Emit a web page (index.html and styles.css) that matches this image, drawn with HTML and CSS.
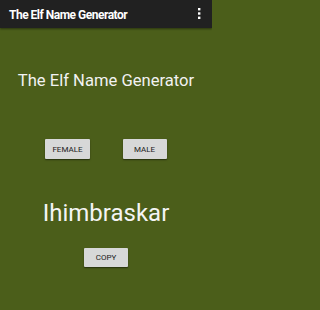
FILE: index.html
```html
<!DOCTYPE html>
<html>
<head>
<meta charset="utf-8">
<link rel="stylesheet" href="styles.css">
</head>
<body>
<div class="app">
  <header class="toolbar">
    <span class="toolbar-title">The Elf Name Generator</span>
    <svg class="menu" width="4" height="12" viewBox="0 0 4 12">
      <rect x="1" y="0" width="2.4" height="2.4" fill="#fff"/>
      <rect x="1" y="4.3" width="2.4" height="2.4" fill="#fff"/>
      <rect x="1" y="8.6" width="2.4" height="2.4" fill="#fff"/>
    </svg>
  </header>
  <main class="content">
    <h1 class="heading">The Elf Name Generator</h1>
    <div class="choices">
      <button class="btn">FEMALE</button>
      <button class="btn">MALE</button>
    </div>
    <div class="name">Ihimbraskar</div>
    <button class="btn">COPY</button>
  </main>
</div>
</body>
</html>
```
FILE: styles.css
```css
html, body {
  margin: 0;
  padding: 0;
}
body {
  width: 212px;
  height: 310px;
  overflow: hidden;
  background: #4b5e1a;
  font-family: Roboto, "Liberation Sans", sans-serif;
}
.app {
  display: flex;
  flex-direction: column;
  height: 310px;
}
.toolbar {
  height: 28px;
  background: #212121;
  display: flex;
  align-items: center;
  justify-content: space-between;
  padding: 0 11px 0 9px;
  box-shadow: 0 1px 2px rgba(0,0,0,0.45);
  position: relative;
  z-index: 1;
}
.toolbar-title {
  color: #fff;
  font-weight: bold;
  font-size: 12px;
  letter-spacing: -0.5px;
  line-height: 14px;
  padding-top: 1px;
}
.menu {
  display: block;
}
.content {
  display: flex;
  flex-direction: column;
  align-items: center;
}
.heading {
  margin: 43px 0 0;
  font-weight: normal;
  font-size: 16.6px;
  line-height: 20px;
  color: #f2f2f2;
}
.choices {
  display: flex;
  gap: 33px;
  margin-top: 48px;
}
.btn {
  font-family: Roboto, "Liberation Sans", sans-serif;
  font-size: 8px;
  font-weight: normal;
  color: #1a1a1a;
  background: #d7d8d8;
  border: none;
  border-radius: 1px;
  height: 20px;
  min-width: 44px;
  padding: 0 7px;
  box-shadow: 0 1px 1.5px rgba(0,0,0,0.5);
}
.name {
  margin-top: 40px;
  font-size: 24px;
  line-height: 28px;
  color: #f4f4f4;
}
.content > .btn {
  margin-top: 21px;
  height: 19px;
}
```
